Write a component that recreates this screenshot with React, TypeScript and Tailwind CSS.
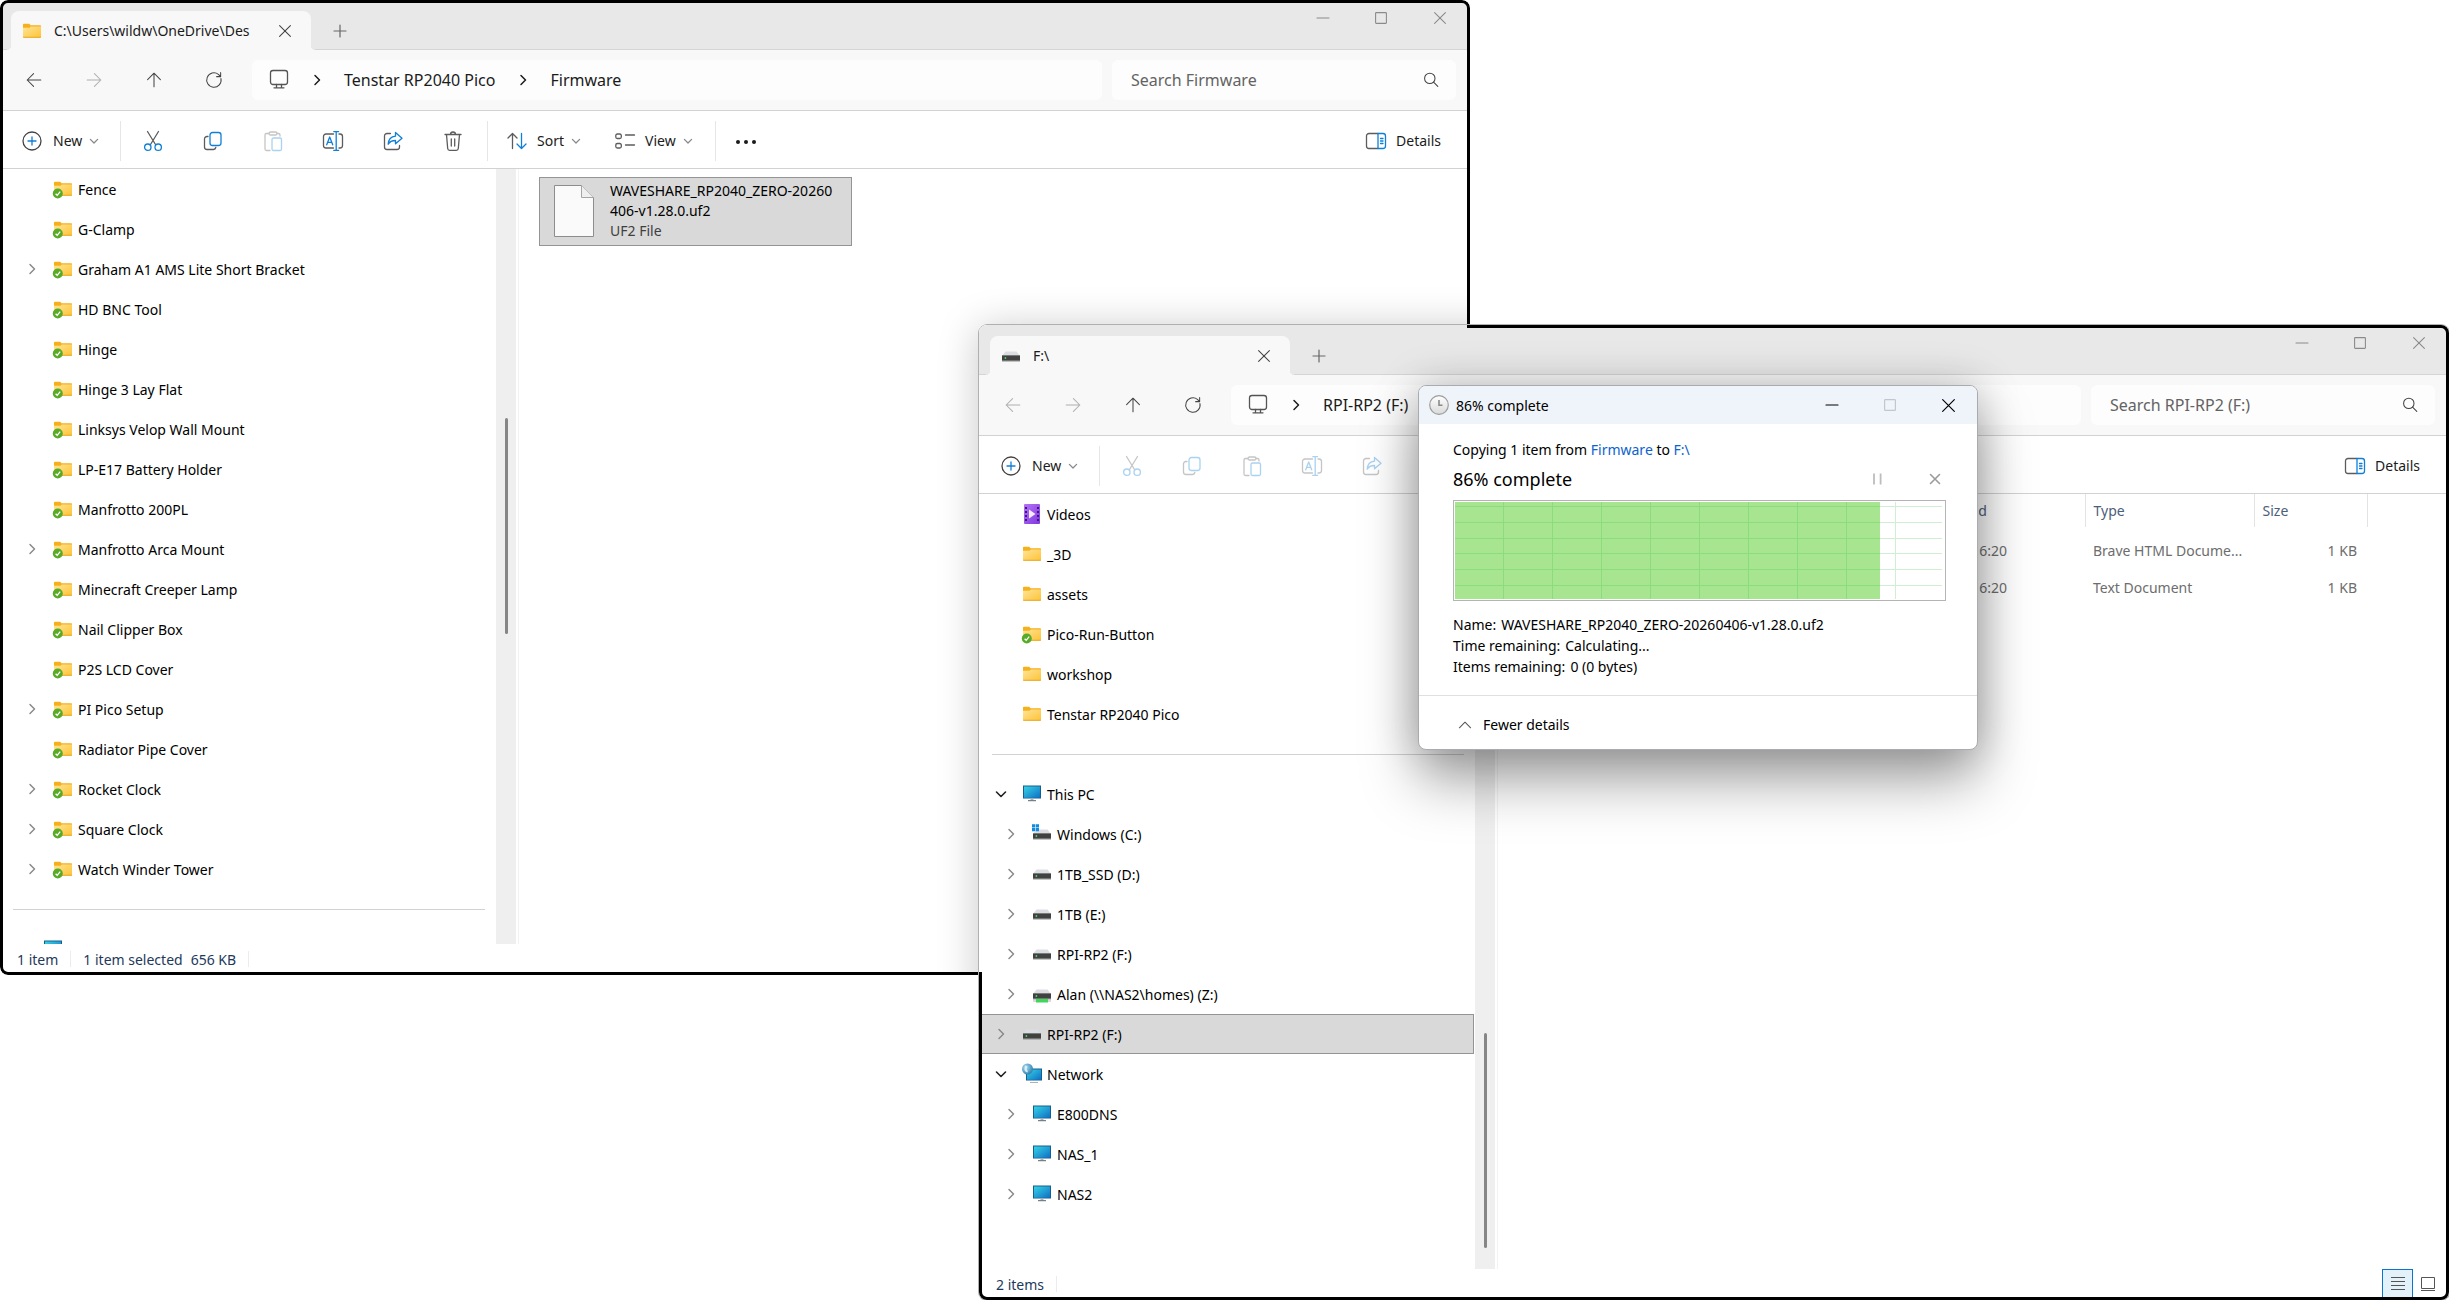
import React from 'react';
import clsx from 'clsx';

type IconName = 'folder' | 'synced' | 'videos' | 'pc' | 'network' | 'drive' | 'windows' | 'netdrive';

interface TreeItem {
  label?: string;
  icon?: IconName;
  depth?: 0 | 1;
  arrow?: 'closed' | 'open';
  selected?: boolean;
  divider?: boolean;
}

const firmwareTree: TreeItem[] = [
  { label: 'Fence', icon: 'synced', depth: 1 },
  { label: 'G-Clamp', icon: 'synced', depth: 1 },
  { label: 'Graham A1 AMS Lite Short Bracket', icon: 'synced', depth: 1, arrow: 'closed' },
  { label: 'HD BNC Tool', icon: 'synced', depth: 1 },
  { label: 'Hinge', icon: 'synced', depth: 1 },
  { label: 'Hinge 3 Lay Flat', icon: 'synced', depth: 1 },
  { label: 'Linksys Velop Wall Mount', icon: 'synced', depth: 1 },
  { label: 'LP-E17 Battery Holder', icon: 'synced', depth: 1 },
  { label: 'Manfrotto 200PL', icon: 'synced', depth: 1 },
  { label: 'Manfrotto Arca Mount', icon: 'synced', depth: 1, arrow: 'closed' },
  { label: 'Minecraft Creeper Lamp', icon: 'synced', depth: 1 },
  { label: 'Nail Clipper Box', icon: 'synced', depth: 1 },
  { label: 'P2S LCD Cover', icon: 'synced', depth: 1 },
  { label: 'PI Pico Setup', icon: 'synced', depth: 1, arrow: 'closed' },
  { label: 'Radiator Pipe Cover', icon: 'synced', depth: 1 },
  { label: 'Rocket Clock', icon: 'synced', depth: 1, arrow: 'closed' },
  { label: 'Square Clock', icon: 'synced', depth: 1, arrow: 'closed' },
  { label: 'Watch Winder Tower', icon: 'synced', depth: 1, arrow: 'closed' },
  { divider: true },
  { label: '', icon: 'pc' },
];

const driveTree: TreeItem[] = [
  { label: 'Videos', icon: 'videos' },
  { label: '_3D', icon: 'folder' },
  { label: 'assets', icon: 'folder' },
  { label: 'Pico-Run-Button', icon: 'synced' },
  { label: 'workshop', icon: 'folder' },
  { label: 'Tenstar RP2040 Pico', icon: 'folder' },
  { divider: true },
  { label: 'This PC', icon: 'pc', arrow: 'open' },
  { label: 'Windows (C:)', icon: 'windows', depth: 1, arrow: 'closed' },
  { label: '1TB_SSD (D:)', icon: 'drive', depth: 1, arrow: 'closed' },
  { label: '1TB (E:)', icon: 'drive', depth: 1, arrow: 'closed' },
  { label: 'RPI-RP2 (F:)', icon: 'drive', depth: 1, arrow: 'closed' },
  { label: 'Alan (\\\\NAS2\\homes) (Z:)', icon: 'netdrive', depth: 1, arrow: 'closed' },
  { label: 'RPI-RP2 (F:)', icon: 'drive', arrow: 'closed', selected: true },
  { label: 'Network', icon: 'network', arrow: 'open' },
  { label: 'E800DNS', icon: 'pc', depth: 1, arrow: 'closed' },
  { label: 'NAS_1', icon: 'pc', depth: 1, arrow: 'closed' },
  { label: 'NAS2', icon: 'pc', depth: 1, arrow: 'closed' },
];

/* ---------- coloured icons ---------- */

const Gradients = () => (
  <svg width="0" height="0" className="absolute" aria-hidden="true">
    <defs>
      <linearGradient id="gFolder" x1="0" y1="0" x2="1" y2="1">
        <stop offset="0" stopColor="#ffe49a" />
        <stop offset="1" stopColor="#fdc334" />
      </linearGradient>
      <linearGradient id="gScreen" x1="0" y1="0" x2="1" y2="1">
        <stop offset="0" stopColor="#35d3e4" />
        <stop offset="1" stopColor="#0f6fc6" />
      </linearGradient>
      <linearGradient id="gVideo" x1="0" y1="0" x2="1" y2="1">
        <stop offset="0" stopColor="#b673f3" />
        <stop offset="1" stopColor="#7f37e0" />
      </linearGradient>
      <radialGradient id="gGlobe" cx="0.35" cy="0.35" r="0.7">
        <stop offset="0" stopColor="#a8dcf0" />
        <stop offset="1" stopColor="#2d7fb0" />
      </radialGradient>
      <linearGradient id="gClock" x1="0" y1="0" x2="0" y2="1">
        <stop offset="0" stopColor="#ffffff" />
        <stop offset="1" stopColor="#d9d9d9" />
      </linearGradient>
    </defs>
  </svg>
);

const FolderShape = () => (
  <>
    <path d="M1 3.500a.8.800 0 0 1 .8-.8h5.400l1.400 1.600H18.200a.8.800 0 0 1 .8.800V8H1z" fill="#f5b01c" />
    <path d="M1 6.800h6.500l1.300-1.400H19V16a.8.800 0 0 1-.8.800H1.800A.8.800 0 0 1 1 16z" fill="url(#gFolder)" />
    <path d="M1 15.800h18v.200a.8.800 0 0 1-.8.800H1.800A.8.800 0 0 1 1 16z" fill="#e9a623" />
  </>
);

const DriveShape = () => (
  <>
    <path d="M4.500 5.500h11L19 10H1z" fill="#dcdde2" />
    <rect x="1" y="9.500" width="18" height="6" fill="#8b8b8b" />
    <rect x="1" y="9.500" width="18" height="4.800" fill="#414141" />
    <circle cx="4.400" cy="12" r=".9" fill="#3fe05a" />
  </>
);

const FileIcon = ({ name }: { name: IconName }) => (
  <svg viewBox="0 0 20 20" className="size-5 shrink-0 overflow-visible" aria-hidden="true">
    {name === 'folder' && <FolderShape />}
    {name === 'synced' && (
      <>
        <FolderShape />
        <circle cx="4.800" cy="14.500" r="5" fill="#57ab27" />
        <path d="M2.600 14.700l1.600 1.600 3-3.600" fill="none" stroke="#fff" strokeWidth="1.300" />
      </>
    )}
    {name === 'videos' && (
      <>
        <rect x="2" y="0" width="16" height="20" rx="1" fill="url(#gVideo)" />
        <path d="M7 5.500v9l6.500-4.500z" fill="#f5edff" />
        <path d="M4 3v15M16 3v15" stroke="#3d1780" strokeWidth="2" strokeDasharray="2 2" />
      </>
    )}
    {name === 'pc' && (
      <>
        <rect x="1" y="1.500" width="18" height="13" fill="#165f8d" />
        <rect x="2" y="2.500" width="16" height="11.300" fill="url(#gScreen)" />
        <path d="M8.500 14.500h3v1.700h-3z" fill="#a9b3ba" />
        <path d="M6 16.200h8v1H6z" fill="#59636b" />
      </>
    )}
    {name === 'network' && (
      <>
        <rect x="4" y="4.500" width="16" height="12" fill="#165f8d" />
        <rect x="5" y="5.500" width="14" height="10.300" fill="url(#gScreen)" />
        <path d="M8 18h8v1H8z" fill="#a9b3ba" />
        <circle cx="5.500" cy="5" r="5.500" fill="url(#gGlobe)" />
        <path d="M3 1.500c2 .3 3 1.300 2 2.800s1.500 2 .5 4.200C3.500 8 2 6 2.500 4.500z" fill="#d9f0f8" />
      </>
    )}
    {name === 'drive' && <DriveShape />}
    {name === 'windows' && (
      <>
        <DriveShape />
        <path d="M0 .2h3.200v3.200H0zM3.800.2H7v3.200H3.800zM0 4h3.200v3.200H0zM3.800 4H7v3.200H3.800z" fill="#0f8be0" />
      </>
    )}
    {name === 'netdrive' && (
      <>
        <DriveShape />
        <path d="M1 17h18" stroke="#b5b5b5" strokeWidth="1" />
        <rect x="4" y="15" width="12" height="3.500" fill="#3fd65c" />
      </>
    )}
  </svg>
);

/* ---------- line icons ---------- */

const Line = ({ children, className = 'size-5' }: { children: React.ReactNode; className?: string }) => (
  <svg
    viewBox="0 0 20 20"
    className={clsx('shrink-0 overflow-visible', className)}
    fill="none"
    stroke="currentColor"
    strokeWidth="1.300"
    strokeLinecap="round"
    strokeLinejoin="round"
    aria-hidden="true"
  >
    {children}
  </svg>
);

const BLUE = '#0f7fd8';

const ArrowLeft = () => <Line className="size-4"><path d="M18.500 10H1.500M9.500 2L1.500 10l8 8" /></Line>;
const ArrowRight = () => <Line className="size-4"><path d="M1.500 10h17M10.500 2l8 8-8 8" /></Line>;
const ArrowUp = () => <Line className="size-4"><path d="M10 18.500v-17M2 9.500l8-8 8 8" /></Line>;
const Refresh = () => (
  <Line className="size-4"><path d="M18.700 8.200A9 9 0 1 1 15.500 3l2.600 2.600M18.300 .8v5h-5" /></Line>
);
const Monitor = () => (
  <Line>
    <rect x="1.500" y=".5" width="17" height="14" rx="2.500" />
    <path d="M7.500 14.500v3M12.500 14.500v3M5 17.800h10" />
  </Line>
);
const ChevronRight = ({ className = 'size-5' }: { className?: string }) => (
  <Line className={className}><path d="M8 5.500l4.500 4.500L8 14.500" strokeWidth="1.500" /></Line>
);
const ChevronDown = ({ className = 'size-5' }: { className?: string }) => (
  <Line className={className}><path d="M5.500 8l4.500 4.500L14.500 8" strokeWidth="1.600" /></Line>
);
const Close = ({ className = 'size-3' }: { className?: string }) => (
  <Line className={className}><path d="M1 1l18 18M19 1L1 19" strokeWidth="1.800" /></Line>
);
const Search = () => (
  <Line className="size-4"><circle cx="8.500" cy="8" r="6.500" /><path d="M13.200 12.700l5.300 5.300" /></Line>
);
const NewIcon = () => (
  <Line><circle cx="10" cy="10" r="9" /><path d="M10 6v8M6 10h8" stroke={BLUE} /></Line>
);
const Cut = () => (
  <Line>
    <path d="M4.500 .5l8 13M15.500 .5l-8 13" />
    <circle cx="4.800" cy="16.200" r="3.200" stroke={BLUE} />
    <circle cx="15.200" cy="16.200" r="3.200" stroke={BLUE} />
  </Line>
);
const Copy = () => (
  <Line>
    <path d="M5 5.500H4A2.500 2.500 0 0 0 1.500 8v8A2.500 2.500 0 0 0 4 18.500h6.500a2.500 2.500 0 0 0 2.300-2" />
    <rect x="7" y="1.500" width="11" height="13" rx="2.500" stroke={BLUE} />
  </Line>
);
const Paste = () => (
  <Line>
    <path d="M6 2.500H3.500A1.500 1.500 0 0 0 2 4v14a1.500 1.500 0 0 0 1.500 1.500H7M14 2.500h1.500A1.500 1.500 0 0 1 17 4v1" />
    <rect x="6" y="1" width="8" height="3" rx="1.500" />
    <rect x="9" y="7" width="9.500" height="12.500" rx="1.500" stroke={BLUE} />
  </Line>
);
const Rename = () => (
  <Line>
    <path d="M10.500 3H3A2.500 2.500 0 0 0 .5 5.500v9A2.500 2.500 0 0 0 3 17h7.500M16 3h1a2.500 2.500 0 0 1 2.500 2.500v9A2.500 2.500 0 0 1 17 17h-1" />
    <path d="M13.200 .8v18.400M10.800 .6h4.800M10.800 19.400h4.800M3.700 13.800L6.700 6l3 7.800M4.700 11.300h4" stroke={BLUE} />
  </Line>
);
const Share = () => (
  <Line>
    <path d="M7.500 2.500H4A2.500 2.500 0 0 0 1.500 5v11A2.500 2.500 0 0 0 4 18.500h10a2.500 2.500 0 0 0 2.500-2.500v-1.500" />
    <path d="M12.500 1.500l6.500 5.700-6.500 5.600V9.500c-3.500 0-5.700 1-7.300 3.800.2-4.600 2.800-7.600 7.300-8.100z" stroke={BLUE} />
  </Line>
);
const Trash = () => (
  <Line>
    <path d="M2 3.500h16M7.500 3.500a2.500 2.500 0 0 1 5 0M3.500 3.500l1.200 14a2 2 0 0 0 2 1.800h6.600a2 2 0 0 0 2-1.800l1.200-14M8.300 8v7M11.700 8v7" />
  </Line>
);
const Sort = () => (
  <Line>
    <path d="M5.500 17.500v-15M1 7l4.500-4.500L10 7" />
    <path d="M14.500 2.500v15M10 13l4.500 4.500L19 13" stroke={BLUE} />
  </Line>
);
const View = () => (
  <Line>
    <rect x=".8" y="3" width="5.500" height="4.500" rx="1.500" />
    <rect x=".8" y="12.500" width="5.500" height="4.500" rx="1.500" />
    <path d="M10.500 4h9M10.500 14h9" />
  </Line>
);
const DetailsIcon = () => (
  <Line>
    <path d="M12 2.500H3A2.500 2.500 0 0 0 .5 5v10A2.500 2.500 0 0 0 3 17.500h9" />
    <path d="M12 2.500h5A2.500 2.500 0 0 1 19.500 5v10a2.500 2.500 0 0 1-2.500 2.500h-5zM14.500 7.500h2.500M14.500 10h2.500M14.500 12.500h2.500" stroke={BLUE} />
  </Line>
);

/* ---------- window pieces ---------- */

const WindowControls = () => (
  <div className="flex self-start text-[#8a8a8a]">
    <button aria-label="Minimize" className="flex h-9 w-[58px] items-center justify-center">
      <Line className="size-3"><path d="M0 10h20" strokeWidth="1.800" /></Line>
    </button>
    <button aria-label="Maximize" className="flex h-9 w-[58px] items-center justify-center">
      <Line className="size-3"><rect x="1" y="1" width="18" height="18" rx="1" strokeWidth="1.800" /></Line>
    </button>
    <button aria-label="Close" className="flex h-9 w-[60px] items-center justify-center">
      <Close />
    </button>
  </div>
);

const Separator = () => <span className="h-10 w-px shrink-0 bg-[#e6e6e6]" />;

interface ToolButtonProps {
  label: string;
  disabled?: boolean;
  children: React.ReactNode;
}

const ToolButton = ({ label, disabled, children }: ToolButtonProps) => (
  <button
    aria-label={label}
    disabled={disabled}
    className="flex h-10 w-[60px] shrink-0 items-center justify-center text-[#5c5c5c] disabled:opacity-35"
  >
    {children}
  </button>
);

const NavButton = ({ label, disabled, children }: ToolButtonProps) => (
  <button
    aria-label={label}
    disabled={disabled}
    className="flex h-10 w-[60px] shrink-0 items-center justify-center disabled:opacity-40"
  >
    {children}
  </button>
);

const TreeRow = ({ item }: { item: TreeItem }) => {
  if (item.divider) {
    return (
      <li className="flex h-10 items-center pr-[11px] pl-[13px]">
        <hr className="w-full border-[#d2d2d2]" />
      </li>
    );
  }
  return (
    <li
      className={clsx(
        'mr-px h-10 border',
        item.selected ? 'border-[#949494] bg-[#d9d9d9]' : 'border-transparent'
      )}
    >
      <button className={clsx('flex h-full w-full items-center text-left', item.depth ? 'pl-[21px]' : 'pl-[11px]')}>
        <span className="mr-[11px] flex w-5 shrink-0 justify-center">
          {item.arrow === 'closed' && <ChevronRight className="size-5 text-[#8a8a8a]" />}
          {item.arrow === 'open' && <ChevronDown className="size-5 text-[#222]" />}
        </span>
        <FileIcon name={item.icon ?? 'folder'} />
        <span className="ml-[5px] whitespace-nowrap text-black">{item.label}</span>
      </button>
    </li>
  );
};

interface ExplorerProps {
  title: string;
  tabIcon: IconName;
  path: string[];
  searchLabel: string;
  canGoBack?: boolean;
  hasSelection?: boolean;
  tree: TreeItem[];
  thumb: string;
  status: React.ReactNode;
  statusRight?: React.ReactNode;
  children: React.ReactNode;
}

const Explorer = ({
  title,
  tabIcon,
  path,
  searchLabel,
  canGoBack,
  hasSelection,
  tree,
  thumb,
  status,
  statusRight,
  children,
}: ExplorerProps) => (
  <div className="flex h-full flex-col overflow-hidden rounded-lg bg-white text-[14px] text-[#1b1b1b]">
    {/* Tabs */}
    <div className="flex h-[50px] shrink-0 items-end border-b border-[#d5d5d5] bg-[#e8e8e8] pl-[11px]">
      <div className="relative -mb-px flex h-[39px] w-[300px] items-center rounded-t-lg bg-[#f8f8f8] pr-5 pl-[11px] before:absolute before:bottom-0 before:-left-1 before:size-1 before:bg-[radial-gradient(circle_at_0_0,#e8e8e8_4px,#f8f8f8_4px)] after:absolute after:-right-1 after:bottom-0 after:size-1 after:bg-[radial-gradient(circle_at_100%_0,#e8e8e8_4px,#f8f8f8_4px)]">
        <FileIcon name={tabIcon} />
        <span className="ml-3 whitespace-nowrap">{title}</span>
        <button aria-label="Close tab" className="ml-auto text-[#444]">
          <Close />
        </button>
      </div>
      <button aria-label="New tab" className="mb-3 ml-[23px] text-[#666]">
        <Line className="size-3"><path d="M10 0v20M0 10h20" strokeWidth="2" /></Line>
      </button>
      <div className="ml-auto flex h-full">
        <WindowControls />
      </div>
    </div>

    {/* Address bar */}
    <div className="flex h-[61px] shrink-0 items-center border-b border-[#d2d2d2] bg-[#f8f8f8] pr-[14px] pl-1 text-[#444]">
      <NavButton label="Back" disabled={!canGoBack}><ArrowLeft /></NavButton>
      <NavButton label="Forward" disabled><ArrowRight /></NavButton>
      <NavButton label="Up"><ArrowUp /></NavButton>
      <NavButton label="Refresh"><Refresh /></NavButton>
      <div className="ml-2 flex h-10 min-w-0 flex-1 items-center rounded-md bg-[#fdfdfd] pl-[17px] text-[16px] text-[#1b1b1b]">
        <span className="text-[#555]"><Monitor /></span>
        {path.map((part) => (
          <React.Fragment key={part}>
            <span className="flex w-[55px] shrink-0 justify-center">
              <ChevronRight />
            </span>
            <button className="whitespace-nowrap">{part}</button>
          </React.Fragment>
        ))}
      </div>
      <label className="ml-[10px] flex h-10 w-[344px] shrink-0 items-center rounded-md bg-[#fdfdfd] pr-[17px] pl-[19px] text-[16px]">
        <input
          type="search"
          aria-label={searchLabel}
          placeholder={searchLabel}
          className="min-w-0 flex-1 bg-transparent outline-none placeholder:text-[#636363]"
        />
        <Search />
      </label>
    </div>

    {/* Command bar */}
    <div className="flex h-[58px] shrink-0 items-center border-b border-[#d2d2d2] pt-0.5">
      <button className="flex w-[120px] shrink-0 items-center pl-[22px]">
        <span className="text-[#444]"><NewIcon /></span>
        <span className="mr-1 ml-[11px]">New</span>
        <ChevronDown className="size-4 text-[#888]" />
      </button>
      <Separator />
      <div className="mr-1 ml-[2px] flex">
        <ToolButton label="Cut" disabled={!hasSelection}><Cut /></ToolButton>
        <ToolButton label="Copy" disabled={!hasSelection}><Copy /></ToolButton>
        <ToolButton label="Paste" disabled><Paste /></ToolButton>
        <ToolButton label="Rename" disabled={!hasSelection}><Rename /></ToolButton>
        <ToolButton label="Share" disabled={!hasSelection}><Share /></ToolButton>
        <ToolButton label="Delete" disabled={!hasSelection}><Trash /></ToolButton>
      </div>
      <Separator />
      <button className="ml-[19px] flex w-[108px] shrink-0 items-center">
        <span className="text-[#5c5c5c]"><Sort /></span>
        <span className="mr-1 ml-[10px]">Sort</span>
        <ChevronDown className="size-4 text-[#888]" />
      </button>
      <button className="flex w-[100px] shrink-0 items-center">
        <span className="text-[#5c5c5c]"><View /></span>
        <span className="mr-1 ml-[10px]">View</span>
        <ChevronDown className="size-4 text-[#888]" />
      </button>
      <Separator />
      <button aria-label="See more" className="flex h-10 w-[60px] shrink-0 items-center justify-center">
        <svg viewBox="0 0 20 20" className="size-5" fill="#1b1b1b" aria-hidden="true">
          <circle cx="2" cy="11" r="2" />
          <circle cx="10" cy="11" r="2" />
          <circle cx="18" cy="11" r="2" />
        </svg>
      </button>
      <button className="mr-[29px] ml-auto flex items-center gap-[10px]">
        <span className="text-[#5c5c5c]"><DetailsIcon /></span>
        Details
      </button>
    </div>

    {/* Navigation pane and content */}
    <div className="flex min-h-0 flex-1">
      <ul className="w-[496px] shrink-0 overflow-hidden">
        {tree.map((item, i) => (
          <TreeRow key={i} item={item} />
        ))}
      </ul>
      <div className="flex w-5 shrink-0 justify-center bg-[#efefef]">
        <span className={clsx('w-[3px] rounded-full bg-[#868686]', thumb)} />
      </div>
      <div className="ml-[2px] min-w-0 flex-1 border-l border-[#f3f3f3]">{children}</div>
    </div>

    {/* Status bar */}
    <div className="flex h-[31px] shrink-0 items-center pr-[14px] pb-px pl-[17px] text-[#1e395b]">
      {status}
      <div className="ml-auto flex items-center">{statusRight}</div>
    </div>
  </div>
);

const StatusSep = () => <span className="mx-3 h-4 w-px bg-[#ececec]" />;

const files = [
  { name: 'INDEX.HTM', date: '06/04/2026 16:20', type: 'Brave HTML Docume...', size: '1 KB' },
  { name: 'INFO_UF2.TXT', date: '06/04/2026 16:20', type: 'Text Document', size: '1 KB' },
];

const FileTable = () => (
  <table className="w-[869px] table-fixed text-left text-[#6d6d6d]">
    <thead>
      <tr className="h-[33px] text-[#4c607a]">
        <th className="w-[387px] border-r border-[#e3e3e3] px-2 font-normal">Name</th>
        <th className="w-[200px] border-r border-[#e3e3e3] px-2 font-normal">Date modified</th>
        <th className="w-[169px] border-r border-[#e3e3e3] px-2 font-normal">Type</th>
        <th className="w-[113px] border-r border-[#e3e3e3] px-2 font-normal">Size</th>
      </tr>
    </thead>
    <tbody className="before:block before:h-[5px]">
      {files.map((f) => (
        <tr key={f.name} className="h-[37px] whitespace-nowrap">
          <td className="px-2">{f.name}</td>
          <td className="px-2">{f.date}</td>
          <td className="px-2">{f.type}</td>
          <td className="px-[10px] text-right">{f.size}</td>
        </tr>
      ))}
    </tbody>
  </table>
);

const columns = [49, 98, 147, 196, 245, 294, 343, 392, 441];
const rows = [4, 20, 36, 51, 67, 83];

const CopyDialog = () => (
  <section
    aria-label="Copy progress"
    className="absolute top-[385px] left-[1418px] w-[560px] overflow-hidden rounded-lg border border-[#a9abae] bg-white text-[14px] text-black shadow-[0_0_44px_rgba(0,0,0,0.22),0_32px_56px_rgba(0,0,0,0.34)]"
  >
    <div className="flex h-[38px] items-center bg-[#eff3fa] pl-[10px]">
      <svg viewBox="0 0 20 20" className="size-5" aria-hidden="true">
        <circle cx="10" cy="10" r="9.300" fill="url(#gClock)" stroke="#9c9c9c" strokeWidth="1.200" />
        <path d="M10 5v5.300h3.500" fill="none" stroke="#8a8a8a" strokeWidth="1.600" />
      </svg>
      <h1 className="ml-[7px]">86% complete</h1>
      <div className="ml-auto flex">
        <button aria-label="Minimize" className="flex h-[38px] w-[58px] items-center justify-center">
          <Line className="size-3"><path d="M0 10h20" strokeWidth="2" /></Line>
        </button>
        <button aria-label="Maximize" disabled className="flex h-[38px] w-[58px] items-center justify-center text-[#c3c6cc]">
          <Line className="size-3"><rect x="1" y="1" width="18" height="18" rx="1" strokeWidth="2" /></Line>
        </button>
        <button aria-label="Close" className="flex h-[38px] w-[58px] items-center justify-center">
          <Close className="size-[13px]" />
        </button>
      </div>
    </div>

    <div className="pt-4 pr-[31px] pb-[18px] pl-[34px]">
      <p className="leading-5">
        Copying 1 item from <a href="#firmware" className="text-[#0b63ce]">Firmware</a> to{' '}
        <a href="#drive" className="text-[#0b63ce]">F:\</a>
      </p>
      <div className="mt-1 flex h-[30px] items-center">
        <h2 className="text-[18px]">86% complete</h2>
        <button aria-label="Pause" className="ml-auto flex w-[58px] justify-center text-[#bdbdbd]">
          <Line className="size-3"><path d="M5 1v18M16 1v18" strokeWidth="3" strokeLinecap="butt" /></Line>
        </button>
        <button aria-label="Cancel" className="-mr-[18px] flex w-[58px] justify-center text-[#9b9b9b]">
          <Line className="size-[10px]"><path d="M1 1l18 18M19 1L1 19" strokeWidth="3.200" /></Line>
        </button>
      </div>
      <div className="mt-[6px] border border-[#b4b4b4] p-px">
        <svg className="block h-[97px] w-full" viewBox="0 0 489 97" preserveAspectRatio="none" aria-label="Transfer speed">
          {rows.map((y) => (
            <path key={y} d={`M0 ${y}.5H487`} stroke="#cfeed4" />
          ))}
          {columns.map((x) => (
            <path key={x} d={`M${x - 1}.5 0V97`} stroke="#cfeed4" />
          ))}
          <rect width="425" height="97" fill="#a7e591" />
          {rows.map((y) => (
            <path key={y} d={`M0 ${y}.5H425`} stroke="#8bdc7b" />
          ))}
          {columns.slice(0, 8).map((x) => (
            <path key={x} d={`M${x - 1}.5 0V97`} stroke="#8bdc7b" />
          ))}
        </svg>
      </div>
      <dl className="mt-[13px] leading-[21px]">
        <div className="flex gap-[5px]">
          <dt>Name:</dt>
          <dd>WAVESHARE_RP2040_ZERO-20260406-v1.28.0.uf2</dd>
        </div>
        <div className="flex gap-[5px]">
          <dt>Time remaining:</dt>
          <dd>Calculating...</dd>
        </div>
        <div className="flex gap-[5px]">
          <dt>Items remaining:</dt>
          <dd>0 (0 bytes)</dd>
        </div>
      </dl>
    </div>

    <div className="h-[54px] border-t border-[#e0e0e0] pl-[38px]">
      <button className="flex h-full items-center gap-[10px] pt-1">
        <Line className="size-4 text-[#555]"><path d="M3 13.500l7-7 7 7" /></Line>
        Fewer details
      </button>
    </div>
  </section>
);

export default function App() {
  return (
    <main className="relative h-screen min-h-[900px] w-full overflow-hidden bg-white font-['Noto_Sans',sans-serif]">
      <Gradients />

      {/* Source window */}
      <section aria-label="Firmware" className="absolute top-0 right-[979px] bottom-[325px] left-0 overflow-hidden rounded-lg">
        <Explorer
          title="C:\Users\wildw\OneDrive\Des"
          tabIcon="folder"
          path={['Tenstar RP2040 Pico', 'Firmware']}
          searchLabel="Search Firmware"
          canGoBack
          hasSelection
          tree={firmwareTree}
          thumb="mt-[249px] h-[216px]"
          status={
            <>
              <span>1 item</span>
              <StatusSep />
              <span>1 item selected</span>
              <span className="ml-2">656 KB</span>
              <StatusSep />
            </>
          }
        >
          <button className="mt-2 ml-5 flex h-[69px] w-[313px] items-start border border-[#949494] bg-[#d9d9d9] pt-[3px] pl-[14px] text-left">
            <svg viewBox="0 0 40 52" className="mt-1 h-[52px] w-10 shrink-0" aria-hidden="true">
              <path d="M.5.500h27l12 12v39H.5z" fill="#fafafa" stroke="#8d8d8d" />
              <path d="M27.500.5v12h12" fill="#efefef" stroke="#a5a5a5" />
            </svg>
            <span className="ml-4 leading-5 text-black">
              WAVESHARE_RP2040_ZERO-20260
              <br />
              406-v1.28.0.uf2
              <br />
              <span className="text-[#3f3f3f]">UF2 File</span>
            </span>
          </button>
        </Explorer>
        <div className="pointer-events-none absolute top-[324px] left-[978px] h-full w-full rounded-lg shadow-[0_4px_40px_rgba(0,0,0,0.22)]" />
        <div className="pointer-events-none absolute inset-0 rounded-lg border-[3px] border-black" />
      </section>

      {/* Target window */}
      <section aria-label="RPI-RP2" className="absolute top-[325px] right-0 bottom-0 left-[979px] rounded-lg ring-1 ring-[#b0b0b0]">
        <Explorer
          title="F:\"
          tabIcon="drive"
          path={['RPI-RP2 (F:)']}
          searchLabel="Search RPI-RP2 (F:)"
          tree={driveTree}
          thumb="mt-[539px] h-[215px]"
          status={
            <>
              <span>2 items</span>
              <StatusSep />
            </>
          }
          statusRight={
            <>
              <button aria-label="Details view" className="flex h-[30px] w-[31px] items-center justify-center border border-[#0b74cf] bg-[#e3f1fb] text-[#555]">
                <svg viewBox="0 0 14 14" className="size-[14px]" stroke="currentColor" aria-hidden="true">
                  <path d="M0 .5h14M0 4.500h14M0 8.500h14M0 12.500h14" />
                </svg>
              </button>
              <button aria-label="Thumbnail view" className="ml-2 text-[#555]">
                <svg viewBox="0 0 14 14" className="size-[14px]" stroke="currentColor" fill="none" aria-hidden="true">
                  <path d="M.5.500h13v11H.5zM0 13.500h14" />
                </svg>
              </button>
            </>
          }
        >
          <FileTable />
        </Explorer>
      </section>

      <CopyDialog />

      {/* Outline of the target window, left open where it overlaps the source window */}
      <div className="pointer-events-none absolute top-[325px] right-0 bottom-0 left-[979px] rounded-lg border-[3px] border-black [clip-path:polygon(calc(100%-982px)_0,100%_0,100%_100%,0_100%,0_calc(100%-328px),calc(100%-982px)_calc(100%-328px))]" />
    </main>
  );
}
